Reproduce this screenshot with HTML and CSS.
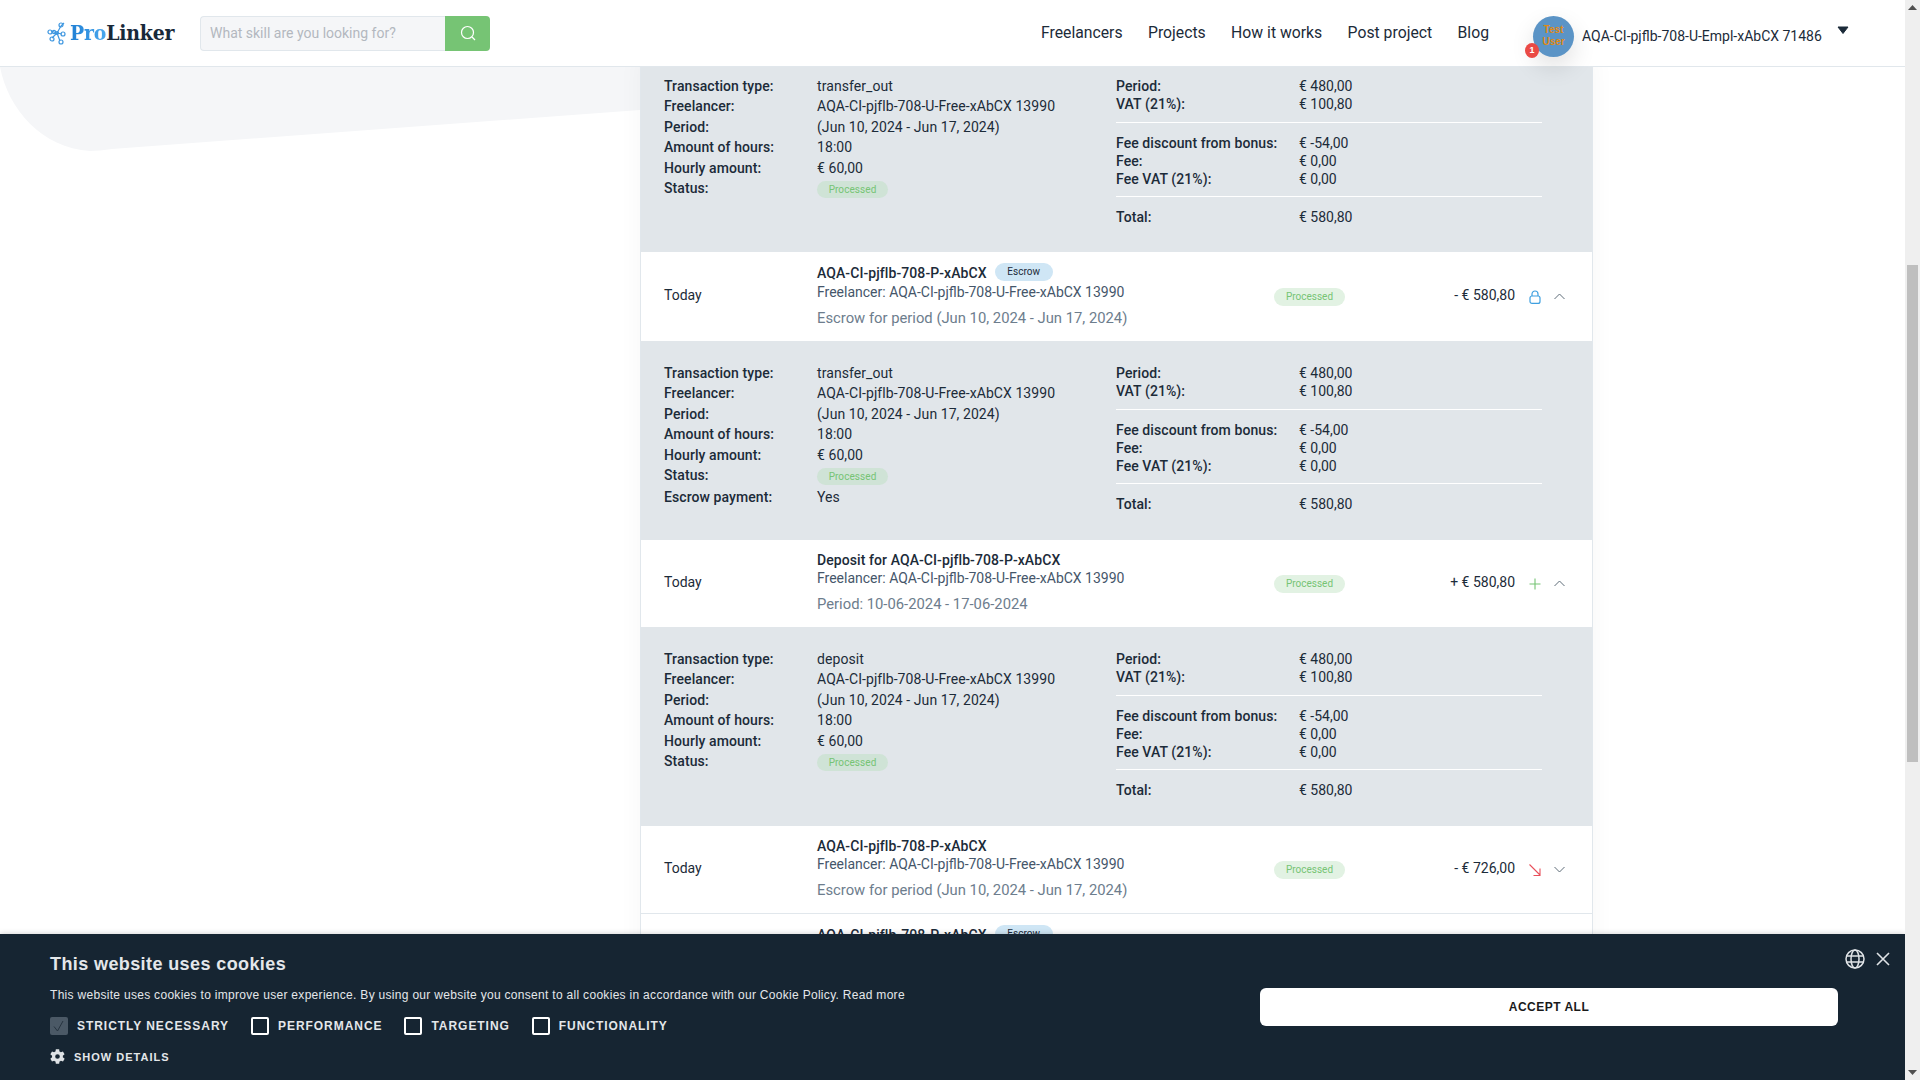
FILE: index.html
```html
<!DOCTYPE html>
<html>
<head>
	<meta charset="utf-8">
	<title>ProLinker</title>
	<link rel="stylesheet" href="styles.css">
</head>
<body>
<div class="page">
	<svg class="blob" width="640" height="90" viewBox="0 0 640 90"><path d="M0 0H640V43L112 82C104 83 96 84 90 84C42 81 8 42 0 0Z" fill="#f5f6f8"/></svg>
	<div class="header">
		<div class="logo">
			<svg width="20" height="24" viewBox="0 0 20 24" fill="none" stroke="#3f97e0" stroke-width="1.2">
				<path d="M10 12L14 5M10 12L4 10M10 12L5 17M10 12L15 13M10 12L13 20M14 5L17 2"/>
				<circle cx="14" cy="4" r="2"/><circle cx="3" cy="11" r="2"/><circle cx="7" cy="11" r="1.6"/><circle cx="5" cy="18" r="2"/><circle cx="16" cy="13" r="2"/><circle cx="14" cy="21" r="2"/><circle cx="10" cy="12" r="1.5"/>
			</svg>
			<span class="logo-text"><span class="logo-pro">Pro</span>Linker</span>
		</div>
		<div class="search">
			<div class="search-input">What skill are you looking for?</div>
			<div class="search-btn">
				<svg width="16" height="16" viewBox="0 0 16 16" fill="none" stroke="#fff" stroke-width="1.2"><circle cx="7.5" cy="7.5" r="6"/><path d="M12 12L15 15"/></svg>
			</div>
		</div>
		<ul class="nav">
			<li>Freelancers</li>
			<li>Projects</li>
			<li>How it works</li>
			<li>Post project</li>
			<li>Blog</li>
		</ul>
		<div class="user">
			<div class="avatar">Test User<span class="count">1</span></div>
			<span class="user-name">AQA-CI-pjflb-708-U-Empl-xAbCX 71486</span>
			<svg class="caret" width="12" height="8" viewBox="0 0 12 8"><path d="M1 1H11L6 7.5Z" fill="#1b2a38" stroke="#1b2a38" stroke-linejoin="round"/></svg>
		</div>
	</div>

	<div class="panel">
		<div class="detail detail-top">
			<div class="detail-left">
				<div class="line"><b>Transaction type:</b><span>transfer_out</span></div>
				<div class="line"><b>Freelancer:</b><span>AQA-CI-pjflb-708-U-Free-xAbCX 13990</span></div>
				<div class="line"><b>Period:</b><span>(Jun 10, 2024 - Jun 17, 2024)</span></div>
				<div class="line"><b>Amount of hours:</b><span>18:00</span></div>
				<div class="line"><b>Hourly amount:</b><span>€ 60,00</span></div>
				<div class="line"><b>Status:</b><span><i class="pill pill-dim">Processed</i></span></div>
			</div>
			<div class="detail-right">
				<div class="sum"><b>Period:</b><span>€ 480,00</span></div>
				<div class="sum"><b>VAT (21%):</b><span>€ 100,80</span></div>
				<hr>
				<div class="sum"><b>Fee discount from bonus:</b><span>€ -54,00</span></div>
				<div class="sum"><b>Fee:</b><span>€ 0,00</span></div>
				<div class="sum"><b>Fee VAT (21%):</b><span>€ 0,00</span></div>
				<hr class="second">
				<div class="sum"><b>Total:</b><span>€ 580,80</span></div>
			</div>
		</div>

		<div class="row">
			<div class="date">Today</div>
			<div class="info">
				<div class="title has-tag">AQA-CI-pjflb-708-P-xAbCX<i class="tag">Escrow</i></div>
				<div class="who">Freelancer: AQA-CI-pjflb-708-U-Free-xAbCX 13990</div>
				<div class="sub">Escrow for period (Jun 10, 2024 - Jun 17, 2024)</div>
			</div>
			<div><i class="pill">Processed</i></div>
			<div class="amount">- € 580,80</div>
			<svg class="kind" width="12" height="14" viewBox="0 0 12 14" fill="none" stroke="#3fa0e0" stroke-width="1.2"><rect x="1" y="6" width="10" height="7.4" rx="2"/><path d="M3 6V4a3 3 0 0 1 6 0V6"/></svg>
			<svg class="toggle" width="11" height="7" viewBox="0 0 11 7" fill="none" stroke="#5f6c78"><path d="M.5 6L5.5 1L10.5 6"/></svg>
		</div>
		<div class="detail">
			<div class="detail-left">
				<div class="line"><b>Transaction type:</b><span>transfer_out</span></div>
				<div class="line"><b>Freelancer:</b><span>AQA-CI-pjflb-708-U-Free-xAbCX 13990</span></div>
				<div class="line"><b>Period:</b><span>(Jun 10, 2024 - Jun 17, 2024)</span></div>
				<div class="line"><b>Amount of hours:</b><span>18:00</span></div>
				<div class="line"><b>Hourly amount:</b><span>€ 60,00</span></div>
				<div class="line line-status"><b>Status:</b><span><i class="pill pill-dim">Processed</i></span></div>
				<div class="line"><b>Escrow payment:</b><span>Yes</span></div>
			</div>
			<div class="detail-right">
				<div class="sum"><b>Period:</b><span>€ 480,00</span></div>
				<div class="sum"><b>VAT (21%):</b><span>€ 100,80</span></div>
				<hr>
				<div class="sum"><b>Fee discount from bonus:</b><span>€ -54,00</span></div>
				<div class="sum"><b>Fee:</b><span>€ 0,00</span></div>
				<div class="sum"><b>Fee VAT (21%):</b><span>€ 0,00</span></div>
				<hr class="second">
				<div class="sum"><b>Total:</b><span>€ 580,80</span></div>
			</div>
		</div>

		<div class="row">
			<div class="date">Today</div>
			<div class="info">
				<div class="title">Deposit for AQA-CI-pjflb-708-P-xAbCX</div>
				<div class="who">Freelancer: AQA-CI-pjflb-708-U-Free-xAbCX 13990</div>
				<div class="sub">Period: 10-06-2024 - 17-06-2024</div>
			</div>
			<div><i class="pill">Processed</i></div>
			<div class="amount">+ € 580,80</div>
			<svg class="kind" width="12" height="12" viewBox="0 0 12 12" fill="none" stroke="#76c474" stroke-width="1.1"><path d="M6 .5V11.5M.5 6H11.5"/></svg>
			<svg class="toggle" width="11" height="7" viewBox="0 0 11 7" fill="none" stroke="#5f6c78"><path d="M.5 6L5.5 1L10.5 6"/></svg>
		</div>
		<div class="detail">
			<div class="detail-left">
				<div class="line"><b>Transaction type:</b><span>deposit</span></div>
				<div class="line"><b>Freelancer:</b><span>AQA-CI-pjflb-708-U-Free-xAbCX 13990</span></div>
				<div class="line"><b>Period:</b><span>(Jun 10, 2024 - Jun 17, 2024)</span></div>
				<div class="line"><b>Amount of hours:</b><span>18:00</span></div>
				<div class="line"><b>Hourly amount:</b><span>€ 60,00</span></div>
				<div class="line"><b>Status:</b><span><i class="pill pill-dim">Processed</i></span></div>
			</div>
			<div class="detail-right">
				<div class="sum"><b>Period:</b><span>€ 480,00</span></div>
				<div class="sum"><b>VAT (21%):</b><span>€ 100,80</span></div>
				<hr>
				<div class="sum"><b>Fee discount from bonus:</b><span>€ -54,00</span></div>
				<div class="sum"><b>Fee:</b><span>€ 0,00</span></div>
				<div class="sum"><b>Fee VAT (21%):</b><span>€ 0,00</span></div>
				<hr class="second">
				<div class="sum"><b>Total:</b><span>€ 580,80</span></div>
			</div>
		</div>

		<div class="row row-closed">
			<div class="date">Today</div>
			<div class="info">
				<div class="title">AQA-CI-pjflb-708-P-xAbCX</div>
				<div class="who">Freelancer: AQA-CI-pjflb-708-U-Free-xAbCX 13990</div>
				<div class="sub">Escrow for period (Jun 10, 2024 - Jun 17, 2024)</div>
			</div>
			<div><i class="pill">Processed</i></div>
			<div class="amount">- € 726,00</div>
			<svg class="kind" width="12" height="12" viewBox="0 0 12 12" fill="none" stroke="#e8505b" stroke-width="1.1"><path d="M.5 .5L11 11M11 4.5V11.5H4.5"/></svg>
			<svg class="toggle" width="11" height="7" viewBox="0 0 11 7" fill="none" stroke="#5f6c78"><path d="M.5 1L5.5 6L10.5 1"/></svg>
		</div>
		<div class="row row-closed">
			<div class="date">Today</div>
			<div class="info">
				<div class="title has-tag">AQA-CI-pjflb-708-P-xAbCX<i class="tag">Escrow</i></div>
				<div class="who">Freelancer: AQA-CI-pjflb-708-U-Free-xAbCX 13990</div>
			</div>
		</div>
	</div>

	<div class="cookie">
		<div class="cookie-text">
			<div class="cookie-title">This website uses cookies</div>
			<div class="cookie-body">This website uses cookies to improve user experience. By using our website you consent to all cookies in accordance with our Cookie Policy. Read more</div>
			<div class="cookie-opts">
				<label class="opt"><i class="box box-on"><svg width="18" height="18" viewBox="0 0 18 18" fill="none" stroke="#26333f" stroke-width="1"><path d="M4 9.5L7.5 14L13 4"/></svg></i>Strictly necessary</label>
				<label class="opt"><i class="box"></i>Performance</label>
				<label class="opt"><i class="box"></i>Targeting</label>
				<label class="opt"><i class="box"></i>Functionality</label>
			</div>
			<div class="cookie-more">
				<svg width="15" height="17" viewBox="3 2 18 20" fill="#dfe3e6" fill-rule="evenodd"><path d="M18.400 13a7.500 7.500 0 0 0 0-2l2.100-1.600-2-3.500-2.500 1a7.500 7.500 0 0 0-1.700-1L14 3.200h-4l-.4 2.700a7.500 7.500 0 0 0-1.700 1l-2.500-1-2 3.500L5.500 11a7.500 7.500 0 0 0 0 2l-2.100 1.600 2 3.500 2.500-1a7.500 7.500 0 0 0 1.700 1l.4 2.700h4l.4-2.700a7.500 7.500 0 0 0 1.700-1l2.500 1 2-3.500zM12 14.800a2.800 2.800 0 1 1 0-5.600 2.800 2.800 0 0 1 0 5.600z"/></svg>
				Show details
			</div>
		</div>
		<div class="cookie-side">
			<div class="cookie-tools">
				<svg width="20" height="20" viewBox="0 0 20 20" fill="none" stroke="#dfe3e6" stroke-width="1.5"><circle cx="10" cy="10" r="9"/><ellipse cx="10" cy="10" rx="4" ry="9"/><path d="M1.500 7H18.500M1.500 13H18.500"/></svg>
				<svg width="14" height="14" viewBox="0 0 14 14" fill="none" stroke="#dfe3e6" stroke-width="1.6"><path d="M1 1L13 13M13 1L1 13"/></svg>
			</div>
			<div class="cookie-btn">Accept all</div>
		</div>
	</div>
</div>
<div class="scroll">
	<svg width="9" height="5" viewBox="0 0 9 5"><path d="M4.500 0L9 5H0Z" fill="#505050"/></svg>
	<div class="scroll-track"><div class="scroll-thumb"></div></div>
	<svg width="9" height="5" viewBox="0 0 9 5"><path d="M0 0H9L4.500 5Z" fill="#505050"/></svg>
</div>
</body>
</html>
```

FILE: styles.css
```css
*{
	margin:0;
	padding:0;
	box-sizing:border-box;
	list-style:none;
}
html,body{
	height:100%;
	overflow:hidden;
}
body{
	display:flex;
	background:#fff;
	color:#1c2b39;
	font-family:Roboto,"Liberation Sans",sans-serif;
	font-size:14px;
}
i{
	font-style:normal;
}
b{
	font-weight:500;
	letter-spacing:.08px;
}
.page{
	position:relative;
	flex:1;
	min-width:0;
	overflow:hidden;
}
.blob{
	position:absolute;
	left:0;
	top:67px;
}

/* header */
.header{
	position:relative;
	z-index:5;
	display:flex;
	align-items:center;
	height:67px;
	padding:0 0 1px 47px;
	background:#fff;
	border-bottom:1px solid #e1e7ec;
}
.logo{
	display:flex;
	align-items:center;
	width:153px;
	gap:3px;
}
.logo-text{
	font-family:"DejaVu Serif Condensed","DejaVu Serif",serif;
	font-weight:700;
	font-size:21px;
	letter-spacing:-.2px;
	color:#18293a;
}
.logo-pro{
	background:linear-gradient(90deg,#1f7fd4,#4aa8ee);
	-webkit-background-clip:text;
	background-clip:text;
	color:transparent;
}
.search{
	display:flex;
	width:290px;
	height:35px;
	margin-top:1px;
}
.search-input{
	flex:1;
	padding-left:9px;
	line-height:32px;
	background:#f5f6f8;
	border:1px solid #e1e7ec;
	border-right:0;
	border-radius:4px 0 0 4px;
	color:#b3b8bf;
	font-size:14px;
}
.search-btn{
	display:flex;
	align-items:center;
	justify-content:center;
	width:45px;
	background:#76c474;
	border-radius:0 4px 4px 0;
}
.nav{
	display:flex;
	gap:25.4px;
	margin-left:551px;
	font-size:15.75px;
	color:#1c2b39;
}
.user{
	display:flex;
	align-items:center;
	margin:7px 0 0 44px;
	position:relative;
}
.avatar{
	position:relative;
	display:flex;
	align-items:center;
	width:41px;
	height:41px;
	border-radius:50%;
	background:#5b94c6;
	color:#e08a12;
	font-family:"Liberation Sans",sans-serif;
	font-size:10px;
	font-weight:700;
	line-height:12px;
	text-align:center;
	padding:0 8px;
	box-shadow:0 10px 24px rgba(0,0,0,.12);
}
.count{
	position:absolute;
	left:-8px;
	bottom:-1px;
	width:14px;
	height:15px;
	border-radius:50%;
	background:#ea4a45;
	color:#fff;
	font-size:9px;
	line-height:15px;
}
.user-name{
	margin-left:8px;
}
.caret{
	margin:-13px 0 0 15px;
}

/* list */
.panel{
	position:relative;
	width:953px;
	margin:-12px 0 0 640px;
	border-right:1px solid #e1e7ec;
	border-left:1px solid #e1e7ec;
	background:#fff;
	box-shadow:0 0 24px rgba(0,0,0,.04);
}
.row{
	display:grid;
	grid-template-columns:153px 457px 90px 151px 39px 26px;
	align-items:center;
	padding-left:23px;
}
.row-closed{
	border-bottom:1px solid #e1e7ec;
}
.date,.amount{
	margin-bottom:4px;
}
.info{
	padding:11px 0 13px;
}
.title{
	font-weight:500;
	line-height:18px;
	letter-spacing:.08px;
}
.has-tag{
	line-height:20px;
}
.who{
	line-height:18px;
	color:#45566a;
}
.sub{
	margin-top:7px;
	font-size:14.8px;
	line-height:20px;
	color:#6d7d8d;
}
.tag{
	display:inline-block;
	width:58px;
	height:18px;
	margin-left:8px;
	border-radius:9px;
	background:#cfe6f5;
	font-size:10px;
	font-weight:400;
	line-height:18px;
	text-align:center;
	vertical-align:top;
}
.pill{
	display:block;
	width:71px;
	height:18px;
	border-radius:9px;
	background:#e2f2e3;
	color:#76c474;
	font-size:10px;
	line-height:17px;
	text-align:center;
}
.pill-dim{
	height:17px;
	margin-top:3px;
	background:#cfe3d6;
}
.amount{
	text-align:right;
}
.kind{
	margin-left:14px;
}
.detail{
	display:flex;
	height:199px;
	padding:23px 0 0 23px;
	background:#e1e6ea;
}
.detail-top{
	height:197px;
	padding-top:22px;
}
.detail-left{
	width:452px;
	margin-top:-1px;
	letter-spacing:.07px;
}
.detail-right{
	width:426px;
}
.line{
	display:flex;
	height:20.4px;
	line-height:20px;
}
.line b{
	width:153px;
}
.line-status{
	height:22px;
}
.sum{
	display:flex;
	height:18px;
	line-height:18px;
}
.sum b{
	width:183px;
}
.detail hr{
	height:1px;
	margin:9px 0 11px;
	border:0;
	background:#fff;
}
.detail hr.second{
	margin:8px 0 11px;
}

/* cookie bar */
.cookie{
	position:absolute;
	left:0;
	right:0;
	bottom:0;
	z-index:10;
	display:flex;
	justify-content:space-between;
	height:146px;
	padding:20px 15px 0 50px;
	background:#162532;
	color:#e4e7ea;
	font-family:"Liberation Sans",Arial,sans-serif;
	box-shadow:0 0 6px rgba(0,0,0,.2);
}
.cookie-title{
	font-size:18px;
	font-weight:700;
	line-height:21px;
	letter-spacing:.4px;
}
.cookie-body{
	margin-top:12px;
	font-size:12px;
	line-height:16px;
	letter-spacing:.3px;
}
.cookie-opts{
	display:flex;
	gap:22px;
	margin-top:14px;
}
.opt{
	display:flex;
	align-items:center;
	gap:9px;
	font-size:12px;
	font-weight:700;
	letter-spacing:.95px;
	text-transform:uppercase;
}
.box{
	display:block;
	width:18px;
	height:18px;
	border:2px solid #fff;
	border-radius:2px;
}
.box-on{
	border:0;
	background:#4b5966;
}
.cookie-more{
	display:flex;
	align-items:center;
	gap:9px;
	margin-top:13px;
	font-size:11px;
	font-weight:700;
	letter-spacing:1px;
	text-transform:uppercase;
}
.cookie-side{
	display:flex;
	flex-direction:column;
	align-items:flex-end;
	width:630px;
}
.cookie-tools{
	display:flex;
	align-items:center;
	gap:11px;
	margin-top:-5px;
}
.cookie-btn{
	width:578px;
	height:38px;
	margin:19px 52px 0 0;
	border-radius:6px;
	background:#fff;
	color:#1a1a1a;
	font-size:12px;
	font-weight:700;
	line-height:38px;
	letter-spacing:.5px;
	text-align:center;
	text-transform:uppercase;
}

/* scrollbar */
.scroll{
	display:flex;
	flex-direction:column;
	align-items:center;
	width:15px;
	padding:5px 0;
	background:#efefef;
}
.scroll-track{
	flex:1;
	width:100%;
	padding:255px 2px 0;
}
.scroll-thumb{
	height:497px;
	background:#bfbfbf;
}
```
